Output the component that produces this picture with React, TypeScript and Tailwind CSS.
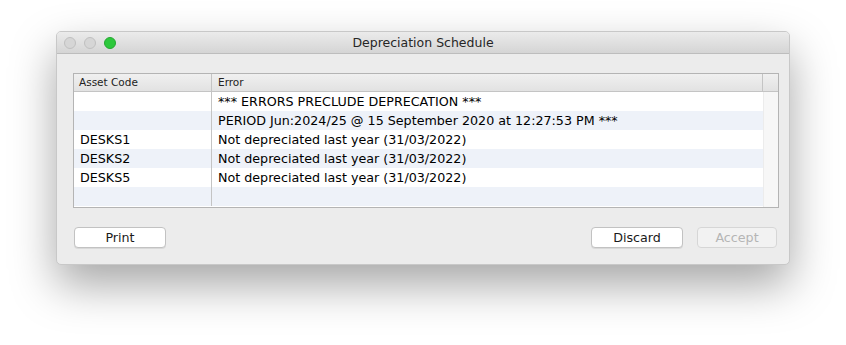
const rows = [
  { code: "", error: "*** ERRORS PRECLUDE DEPRECATION ***" },
  { code: "", error: "PERIOD Jun:2024/25 @ 15 September 2020 at 12:27:53 PM ***" },
  { code: "DESKS1", error: "Not depreciated last year (31/03/2022)" },
  { code: "DESKS2", error: "Not depreciated last year (31/03/2022)" },
  { code: "DESKS5", error: "Not depreciated last year (31/03/2022)" },
  { code: "", error: "" },
];

function Light({ color, border }: { color: string; border: string }) {
  return <span className={`h-3 w-3 rounded-full border ${color} ${border}`} />;
}

export default function App() {
  return (
    <div
      className="min-h-[345px] w-[846px] bg-white pl-[56px] pt-[31px] text-black"
      style={{ fontFamily: '"DejaVu Sans", "Liberation Sans", sans-serif' }}
    >
      <div className="flex h-[234px] w-[734px] flex-col overflow-hidden rounded-[5px] border border-[#c8c8c8] bg-[#ececec] shadow-[0_20px_45px_rgba(0,0,0,0.35)]">
        {/* Title bar */}
        <div className="relative flex h-[22px] shrink-0 items-center border-b border-[#bdbdbd] bg-gradient-to-b from-[#ebebeb] to-[#d5d5d5]">
          <div className="flex items-center gap-2 pl-[7px]">
            <Light color="bg-[#d6d6d6]" border="border-[#c0c0c0]" />
            <Light color="bg-[#d6d6d6]" border="border-[#c0c0c0]" />
            <Light color="bg-[#2dc83c]" border="border-[#25a831]" />
          </div>
          <div className="absolute inset-0 flex items-center justify-center pt-[1px] text-[12.5px] text-[#262626]">
            Depreciation Schedule
          </div>
        </div>

        {/* Body */}
        <div className="flex flex-1 flex-col pl-[16px] pr-[10px] pt-[19px]">
          <div className="flex h-[135px] w-[706px] flex-col border border-[#b4b4b4] bg-white">
            <div className="flex h-[18px] shrink-0 border-b border-[#c4c4c4] bg-gradient-to-b from-[#f0f0f0] to-[#e2e2e2] text-[10.5px] text-[#222]">
              <div className="flex w-[138px] items-center border-r border-[#c4c4c4] pl-[5px]">Asset Code</div>
              <div className="flex flex-1 items-center border-r border-[#c4c4c4] pl-[6px]">Error</div>
              <div className="w-[15px]" />
            </div>
            <div className="flex flex-1">
              <div className="flex flex-1 flex-col">
                {rows.map((r, i) => (
                  <div
                    key={i}
                    className={`flex h-[19px] shrink-0 text-[12.7px] ${i % 2 === 1 ? "bg-[#eef2f9]" : "bg-white"}`}
                  >
                    <div className="flex w-[138px] items-center border-r border-[#c4c4c4] pl-[6px]">{r.code}</div>
                    <div className="flex flex-1 items-center pl-[6px] whitespace-nowrap">{r.error}</div>
                  </div>
                ))}
              </div>
              <div className="w-[15px] border-l border-[#ececec] bg-[#f7f7f7]" />
            </div>
          </div>

          <div className="mt-[19px] flex items-center text-[12.7px]">
            <button className="ml-[1px] h-[21px] w-[92px] rounded-[4px] border border-[#c2c2c2] bg-white text-[#1a1a1a] shadow-[0_1px_0_rgba(0,0,0,0.08)]">
              Print
            </button>
            <div className="flex-1" />
            <button className="h-[21px] w-[92px] rounded-[4px] border border-[#c2c2c2] bg-white text-[#1a1a1a] shadow-[0_1px_0_rgba(0,0,0,0.08)]">
              Discard
            </button>
            <button className="ml-[14px] mr-[2px] h-[21px] w-[80px] rounded-[4px] border border-[#d6d6d6] bg-[#f2f2f2] text-[#b5b5b5]">
              Accept
            </button>
          </div>
        </div>
      </div>
    </div>
  );
}
